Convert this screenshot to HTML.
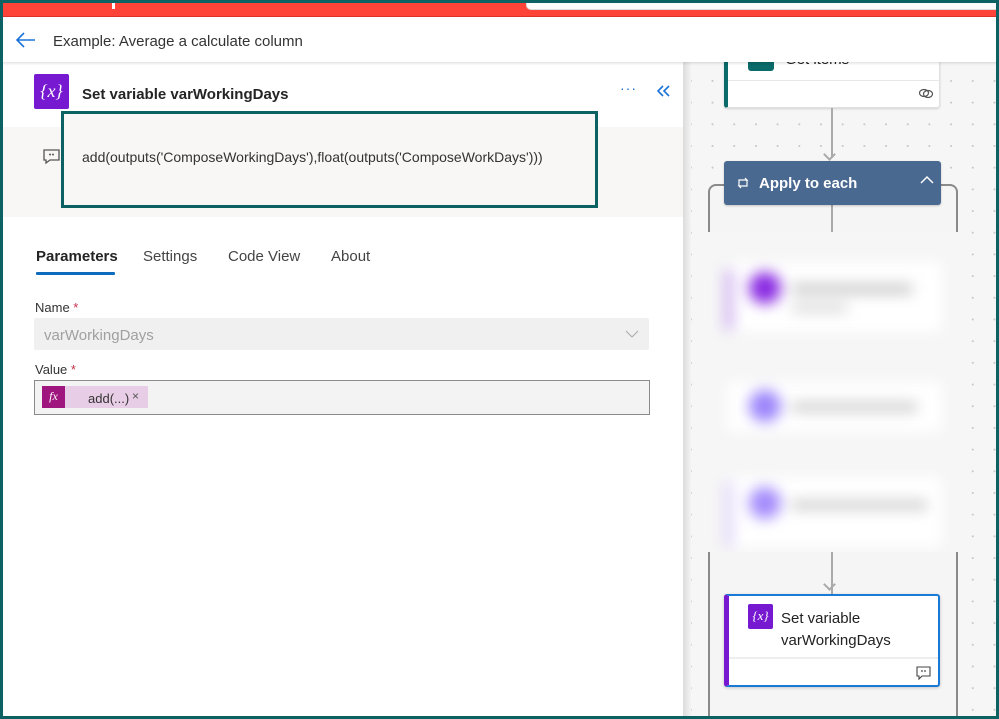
<!DOCTYPE html>
<html><head><meta charset="utf-8"><style>
*{margin:0;padding:0;box-sizing:border-box}
html,body{width:999px;height:719px;overflow:hidden}
body{background:#fff;font-family:"Liberation Sans",sans-serif;position:relative}
.abs{position:absolute}
</style></head><body>
<!-- canvas -->
<div class="abs" style="left:683px;top:0;width:316px;height:719px;background-color:#f6f6f6;background-image:radial-gradient(#c8c8c8 0.8px,transparent 1.2px);background-size:21.7px 21.7px;background-position:-3px 5px"></div>
<div class="abs" style="left:683px;top:0;width:8px;height:719px;background:linear-gradient(to right,#dcdcdc,#f3f3f3)"></div>
<!-- get items card -->
<div class="abs" style="left:724px;top:30px;width:216px;height:78px;background:#fff;border:1px solid #e0e0e0;border-left:4px solid #0b6a6a;border-radius:3px;box-shadow:0 1px 2px rgba(0,0,0,.15)">
 <div class="abs" style="left:20px;top:20px;width:26px;height:20px;background:#0b6a6a;border-radius:3px"></div>
 <div class="abs" style="left:57px;top:20px;font-size:15px;color:#222">Get items</div>
 <div class="abs" style="left:0;top:49px;width:212px;height:1px;background:#e8e8e8"></div>
 <svg class="abs" style="left:190px;top:56px" width="16" height="12" viewBox="0 0 16 12"><ellipse cx="6" cy="6" rx="4.5" ry="3.5" fill="none" stroke="#555" stroke-width="1.2"/><ellipse cx="10" cy="7" rx="4.5" ry="3.5" fill="none" stroke="#555" stroke-width="1.2"/></svg>
</div>
<div class="abs" style="left:831px;top:108px;width:2px;height:50px;background:#aaa"></div>
<div class="abs" style="left:825px;top:150px;width:9px;height:9px;border-right:2px solid #aaa;border-bottom:2px solid #aaa;transform:rotate(45deg)"></div>
<!-- container -->
<div class="abs" style="left:708px;top:184px;width:250px;height:560px;border:2px solid #8a8a8a;border-radius:8px;background:#f5f5f5"></div>
<div class="abs" style="left:831px;top:204px;width:2px;height:390px;background:#aaa"></div>
<div class="abs" style="left:825px;top:580px;width:9px;height:9px;border-right:2px solid #aaa;border-bottom:2px solid #aaa;transform:rotate(45deg)"></div>
<div class="abs" style="left:724px;top:161px;width:217px;height:44px;background:#4a6990;border-radius:3px;box-shadow:0 1px 2px rgba(0,0,0,.2)">
 <svg class="abs" style="left:12px;top:16px" width="14" height="12" viewBox="0 0 14 12"><path d="M3 9V3h8l-2-2M11 3v6H3l2 2" fill="none" stroke="#fff" stroke-width="1.2"/></svg>
 <div class="abs" style="left:35px;top:14px;font-size:15px;font-weight:bold;color:#fff">Apply to each</div>
 <svg class="abs" style="left:196px;top:14px" width="14" height="10" viewBox="0 0 14 10"><path d="M1 8l6-6 6 6" fill="none" stroke="#fff" stroke-width="1.5"/></svg>
</div>
<!-- blurred -->
<div class="abs" style="left:697px;top:232px;width:270px;height:320px;background:#f6f6f6;overflow:hidden">
 <div style="filter:blur(7px)">
  <div class="abs" style="left:30px;top:30px;width:215px;height:70px;background:#fff"></div>
  <div class="abs" style="left:28px;top:38px;width:8px;height:60px;background:#c9a8ee"></div>
  <div class="abs" style="left:52px;top:40px;width:32px;height:32px;border-radius:50%;background:#8a2be2"></div>
  <div class="abs" style="left:95px;top:52px;width:120px;height:10px;background:#c8c8c8"></div>
  <div class="abs" style="left:95px;top:72px;width:55px;height:8px;background:#d4d4d4"></div>
  <div class="abs" style="left:30px;top:150px;width:215px;height:50px;background:#fff"></div>
  <div class="abs" style="left:52px;top:158px;width:32px;height:32px;border-radius:50%;background:#9c85fb"></div>
  <div class="abs" style="left:95px;top:170px;width:125px;height:10px;background:#cfcfcf"></div>
  <div class="abs" style="left:30px;top:245px;width:215px;height:70px;background:#fff"></div>
  <div class="abs" style="left:28px;top:250px;width:8px;height:65px;background:#ddd2fa"></div>
  <div class="abs" style="left:52px;top:255px;width:32px;height:32px;border-radius:50%;background:#a48cfc"></div>
  <div class="abs" style="left:95px;top:268px;width:135px;height:10px;background:#cfcfcf"></div>
 </div>
</div>
<!-- set variable card -->
<div class="abs" style="left:724px;top:594px;width:216px;height:93px;background:#fff;border:2px solid #1a78d6;border-left:5px solid #7719d0;border-radius:3px;box-shadow:0 1px 3px rgba(0,0,0,.2)">
 <div class="abs" style="left:19px;top:8px;width:25px;height:25px;background:#7719d0;border-radius:2px;color:#fff;font-family:'Liberation Serif',serif;font-size:13px;text-align:center;line-height:24px"><i>{x}</i></div>
 <div class="abs" style="left:52px;top:12px;font-size:15px;line-height:22px;color:#222">Set variable<br>varWorkingDays</div>
 <div class="abs" style="left:0;top:61px;width:209px;height:2px;background:#eee"></div>
 <svg class="abs" style="left:187px;top:70px" width="15" height="14" viewBox="0 0 15 14"><path d="M1 1h13v9H6l-3 3v-3H1z" fill="none" stroke="#444" stroke-width="1.1"/><circle cx="6" cy="5" r=".9" fill="#444"/><circle cx="9" cy="5" r=".9" fill="#444"/></svg>
</div>
<!-- left panel -->
<div class="abs" style="left:0;top:62px;width:683px;height:657px;background:#fff">
 <div class="abs" style="left:34px;top:12px;width:35px;height:35px;background:#7719d0;border-radius:2px;color:#fff;font-family:'Liberation Serif',serif;font-size:18px;text-align:center;line-height:34px"><i>{x}</i></div>
 <div class="abs" style="left:82px;top:24px;font-size:15px;font-weight:bold;color:#242424">Set variable varWorkingDays</div>
 <div class="abs" style="left:620px;top:18px;font-size:14px;color:#1a73d9;letter-spacing:1px">···</div>
 <svg class="abs" style="left:657px;top:23px" width="14" height="12" viewBox="0 0 14 12"><path d="M6 1L1 6l5 5M12 1L7 6l5 5" fill="none" stroke="#1a73d9" stroke-width="1.6"/></svg>
 <div class="abs" style="left:3px;top:65px;width:680px;height:90px;background:#f8f7f6"></div>
 <svg class="abs" style="left:43px;top:87px" width="17" height="16" viewBox="0 0 17 16"><path d="M1 1h15v10H7l-4 3v-3H1z" fill="none" stroke="#555" stroke-width="1.3"/><circle cx="7" cy="5.5" r="1" fill="#555"/><circle cx="10" cy="5.5" r="1" fill="#555"/></svg>
 <div class="abs" style="left:61px;top:49px;width:537px;height:97px;border:3px solid #0c6262;background:#f8f7f6"></div>
 <div class="abs" style="left:82px;top:87px;font-size:14px;color:#333">add(outputs('ComposeWorkingDays'),float(outputs('ComposeWorkDays')))</div>
 <div class="abs" style="left:36px;top:186px;font-size:15px;color:#242424;font-weight:bold;">Parameters</div>
 <div class="abs" style="left:143px;top:186px;font-size:15px;color:#444">Settings</div>
 <div class="abs" style="left:228px;top:186px;font-size:15px;color:#444">Code View</div>
 <div class="abs" style="left:331px;top:186px;font-size:15px;color:#444">About</div>
 <div class="abs" style="left:36px;top:210px;width:79px;height:3px;background:#0f6cbd;border-radius:1px"></div>
 <div class="abs" style="left:35px;top:238px;font-size:13px;color:#333">Name <span style="color:#c4314b">*</span></div>
 <div class="abs" style="left:34px;top:256px;width:615px;height:32px;background:#f0f0f0;border-radius:2px"></div>
 <div class="abs" style="left:44px;top:265px;font-size:15px;color:#a0a0a0">varWorkingDays</div>
 <svg class="abs" style="left:625px;top:268px" width="14" height="8" viewBox="0 0 14 8"><path d="M1 1l6 6 6-6" fill="none" stroke="#aaa" stroke-width="1"/></svg>
 <div class="abs" style="left:35px;top:300px;font-size:13px;color:#333">Value <span style="color:#c4314b">*</span></div>
 <div class="abs" style="left:34px;top:318px;width:616px;height:35px;background:#f3f3f3;border:1px solid #8a8a8a"></div>
 <div class="abs" style="left:42px;top:324px;width:106px;height:22px;background:#e8cde6"></div>
 <div class="abs" style="left:42px;top:324px;width:23px;height:22px;background:#a0167f;color:#fff;font-family:'Liberation Serif',serif;font-size:12px;text-align:center;line-height:21px"><i>fx</i></div>
 <div class="abs" style="left:88px;top:329px;font-size:13px;color:#333">add(...)</div>
 <div class="abs" style="left:132px;top:327px;font-size:12px;color:#555">×</div>
</div>
<!-- header -->
<div class="abs" style="left:0;top:17px;width:999px;height:45px;background:#fff;box-shadow:0 1px 3px rgba(0,0,0,.15)">
 <svg class="abs" style="left:15px;top:14px" width="22" height="18" viewBox="0 0 22 18"><path d="M20 9H2M9 2L2 9l7 7" fill="none" stroke="#1a73d9" stroke-width="1.6"/></svg>
 <div class="abs" style="left:53px;top:16px;font-size:15px;color:#333">Example: Average a calculate column</div>
</div>
<div class="abs" style="left:0;top:0;width:999px;height:17px;background:#fe4439;border-bottom:1px solid #e0302a"></div>
<div class="abs" style="left:112px;top:3px;width:3px;height:6px;background:#fff"></div>
<div class="abs" style="left:526px;top:0;width:473px;height:10px;background:#fcfcfc;border-radius:0 0 0 5px;border:1px solid #ddd;border-top:none"></div>
<!-- outer border -->
<div class="abs" style="left:0;top:0;width:999px;height:719px;border:3px solid #0c6262;pointer-events:none;z-index:10"></div>
</body></html>
